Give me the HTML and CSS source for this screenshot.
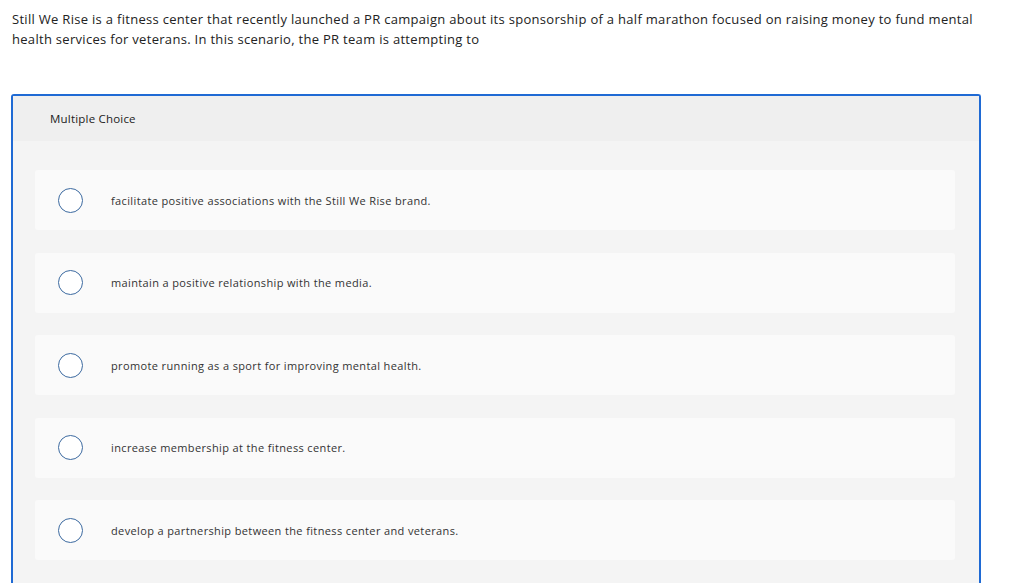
FILE: index.html
```html
<!DOCTYPE html>
<html>
<head>
<meta charset="utf-8">
<link rel="stylesheet" href="styles.css">
</head>
<body>
<p class="question">Still We Rise is a fitness center that recently launched a PR campaign about its sponsorship of a half marathon focused on raising money to fund mental health services for veterans. In this scenario, the PR team is attempting to</p>
<div class="card">
  <div class="card-head">Multiple Choice</div>
  <div class="card-body">
    <div class="option"><span class="radio"></span><span class="label">facilitate positive associations with the Still We Rise brand.</span></div>
    <div class="option"><span class="radio"></span><span class="label">maintain a positive relationship with the media.</span></div>
    <div class="option"><span class="radio"></span><span class="label">promote running as a sport for improving mental health.</span></div>
    <div class="option"><span class="radio"></span><span class="label">increase membership at the fitness center.</span></div>
    <div class="option"><span class="radio"></span><span class="label">develop a partnership between the fitness center and veterans.</span></div>
  </div>
</div>
</body>
</html>
```
FILE: styles.css
```css
html, body {
  margin: 0;
  padding: 0;
  background: #ffffff;
}
body {
  font-family: "Open Sans", "Liberation Sans", Arial, sans-serif;
  color: #222;
  overflow: hidden;
}
.question {
  margin: 0;
  padding: 9px 30px 0 12px;
  font-size: 13px;
  line-height: 20px;
  letter-spacing: 0.3px;
  height: 94px;
  box-sizing: border-box;
}
.card {
  margin-left: 11px;
  width: 970px;
  box-sizing: border-box;
  border: 2px solid #1f6ad4;
  border-bottom: none;
  border-radius: 3px 3px 0 0;
  background: #f4f4f4;
}
.card-head {
  height: 45px;
  background: #efefef;
  display: flex;
  align-items: center;
  padding-left: 37px;
  font-size: 11.5px;
  letter-spacing: 0.2px;
  color: #222;
}
.card-body {
  padding: 29px 24px 23px 22px;
  display: flex;
  flex-direction: column;
  gap: 22.5px;
}
.option {
  height: 60px;
  background: #fafafa;
  border-radius: 3px;
  display: flex;
  align-items: center;
  padding-left: 23px;
}
.radio {
  width: 25px;
  height: 25px;
  box-sizing: border-box;
  border: 1.3px solid #3c6aa0;
  border-radius: 50%;
  background: #fff;
  flex: none;
}
.label {
  margin-left: 28px;
  font-size: 11px;
  letter-spacing: 0.37px;
  color: #333;
}
```
